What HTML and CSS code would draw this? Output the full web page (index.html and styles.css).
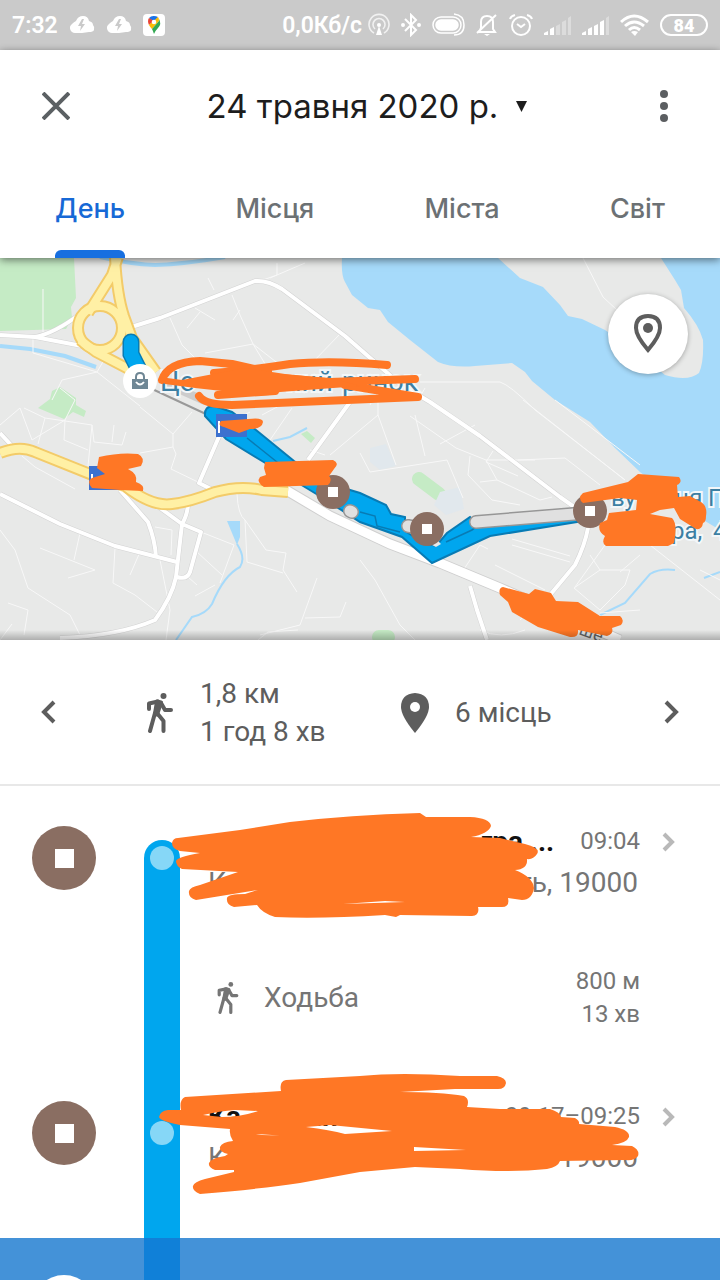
FILE: index.html
```html
<!DOCTYPE html>
<html lang="uk">
<head>
    <meta charset="UTF-8">
    <meta name="viewport" content="width=device-width, initial-scale=1.0">
    <title>Хронологія</title>
    <link rel="stylesheet" href="styles.css">
</head>
<body>
    <div class="status">
        <span>7:32</span>
        <svg class="cloud" width="26" height="20" viewBox="0 0 26 20"><path d="M6 18a5 5 0 0 1-3-9q2-2 4-3 2-5 7-5t6 5q4 1 4 4 2 2 1 5-1 2-5 2l-7 1z" fill="#fff"/><path d="M13 4l-4 7h3l-1 5 5-7h-3l2-5z" fill="#cacaca"/></svg>
        <svg class="cloud" width="26" height="20" viewBox="0 0 26 20"><path d="M6 18a5 5 0 0 1-3-9q2-2 4-3 2-5 7-5t6 5q4 1 4 4 2 2 1 5-1 2-5 2l-7 1z" fill="#fff"/><path d="M13 4l-4 7h3l-1 5 5-7h-3l2-5z" fill="#cacaca"/></svg>
        <svg width="22" height="22" viewBox="0 0 22 22"><rect width="22" height="22" rx="4" fill="#fff"/><path d="M11 2a6 6 0 0 0-5 2l5 4 4-5q-2-1-4-1z" fill="#1a73e8"/><path d="M6 4q-2 3 0 7l5-4z" fill="#ea4335"/><path d="M15 3l-9 8q1 2 3 4l7-8q0-3-1-4z" fill="#fbbc04"/><path d="M16 5q3 5-1 9-3 3-4 6-1-3-2-5l7-8z" fill="#34a853"/><circle cx="11" cy="8" r="2.3" fill="#fff"/></svg>
        <div class="status-right">
            <span>0,0Кб/с</span>
            <div class="status-icons">
                <svg width="22" height="24" viewBox="0 0 22 24" fill="none" stroke="#f1f1f1" stroke-width="1.6"><path d="M6 20a10 10 0 1 1 10 0M7 16a6 6 0 1 1 8 0"/><path d="M11 13l3 9H8z" fill="#fff" stroke="none"/><circle cx="11" cy="12" r="2" fill="#fff" stroke="none"/></svg>
                <svg width="20" height="24" viewBox="0 0 20 24" fill="none" stroke="#fff" stroke-width="2"><path d="M4 6l11 11-5 5V2l5 5L4 18"/><circle cx="2" cy="12" r="1" fill="#fff"/><circle cx="18" cy="12" r="1" fill="#fff"/></svg>
                <svg width="33" height="24" viewBox="0 0 33 24" fill="none" stroke="#fff" stroke-width="1.5"><rect x="1" y="4" width="28" height="16" rx="8"/><rect x="4" y="7" width="22" height="10" rx="5" fill="#fff"/><path d="M22 1q10 1 10 11t-10 10"/></svg>
                <svg width="22" height="24" viewBox="0 0 22 24" fill="none" stroke="#fff" stroke-width="2"><path d="M3 19h16l-2-3V9q0-6-6-6T5 9v6zM1 20L20 2"/><path d="M8 21h6l-3 2z" fill="#fff" stroke="none"/></svg>
                <svg width="24" height="24" viewBox="0 0 24 24" fill="none" stroke="#fff" stroke-width="2"><circle cx="12" cy="13" r="9"/><path d="M8 11l4 3 4-3M1 6q1-3 5-4M23 6q-1-3-5-4"/></svg>
                <svg width="27" height="20" viewBox="0 0 27 20" fill="#fff"><path d="M0 20v-2l4-2v4zM6 20v-6l4-2v8z"/><path d="M12 20v-9l4-2v11zM18 20V7l4-2v15zM24 20V3l3-2v19z" opacity=".35"/></svg>
                <svg width="27" height="20" viewBox="0 0 27 20" fill="#fff"><path d="M0 20v-2l4-2v4zM6 20v-6l4-2v8zM12 20v-9l4-2v11zM18 20V7l4-2v15z"/><path d="M24 20V3l3-2v19z" opacity=".35"/></svg>
                <svg width="29" height="22" viewBox="0 0 29 22" fill="none" stroke="#fff" stroke-width="3"><path d="M1 8q13-12 27 0M5 12q9-8 19 0M9 16q5-5 11 0"/><path d="M11 18q3-2 7 0l-3 4z" fill="#fff" stroke="none"/></svg>
                <span class="battery"><b>84</b></span>
            </div>
        </div>
    </div>

    <header class="header">
        <div class="toolbar">
            <button class="icon-btn" aria-label="Закрити"><svg width="28" height="28" viewBox="0 0 28 28" stroke="#5b6063" stroke-width="4"><path d="M1 1l26 26M27 1L1 27"/></svg></button>
            <button class="date">24 травня 2020 р. <svg width="11" height="11" viewBox="0 0 12 12"><path d="M0 0h12L6 12z" fill="#1d1d1d"/></svg></button>
            <button class="icon-btn" aria-label="Меню"><svg width="8" height="32" viewBox="0 0 8 32" fill="#5b5e61"><circle cx="4" cy="4" r="4"/><circle cx="4" cy="16" r="4"/><circle cx="4" cy="28" r="4"/></svg></button>
        </div>
        <nav class="tabs">
            <a href="#" class="tab active">День</a>
            <a href="#" class="tab">Місця</a>
            <a href="#" class="tab">Міста</a>
            <a href="#" class="tab">Світ</a>
        </nav>
    </header>

    <div class="map">
        <svg class="map-svg" viewBox="0 258 720 382">
            <!-- water and land -->
            <path class="water" d="M342 258Q341 275 345 282L352 295 368 308 380 310 388 322 410 340 438 362Q452 368 475 366L512 363 525 372 532 381 555 400 590 422 615 448 640 472 700 518 720 530V258z"/>
            <path class="land" d="M498 258L520 278 543 287 560 305 568 316 582 319 605 330 640 354 665 375Q688 382 699 373 704 362 703 340 699 325 684 308L681 290 675 280 661 258z"/>
            <path class="green" d="M0 258H74L76 298 71 307 72 318 66 329 0 331z"/>
            <path class="green" d="M60 387L76 398V405L86 411 84 417 73 412 64 419 38 408 50 399 52 391zM301 434L307 431 315 438 311 443z"/>
            <path class="green-line" d="M419 479L439 494M379 637L388 637"/>
            <path d="M370 448l16-4 10 22-16 4-10-8zM440 492l20-5 4 22-18 6-12-10z" fill="#e1e8ed"/>
            <path class="water" d="M227 521H240V537L237 545z"/>
            <g class="stream">
                <path d="M237 544Q246 558 240 567 224 575 212 604 206 614 192 617L176 640M600 615L625 603 650 574Q660 568 675 570M704 578L720 572M273 441L290 437 307 428"/>
                <path d="M0 346L30 349 65 356 96 367M100 257Q130 264 155 265 185 264 225 257" stroke-width="4"/>
            </g>
            <!-- small streets -->
            <g class="minor">
                <path d="M43 289V334M33 336V353L97 372 140 406M97 372L104 360M52 400L62 380 97 372M208 278L214 290M232 295L240 315 253 344 270 372M277 263V275L260 281M305 263L270 278M195 308L215 320M200 312L187 328M240 310L233 320M170 318L182 345 195 358M205 353L253 344 280 365M340 334L310 365M0 425L20 408 32 440 65 420 75 400 60 388M24 408L45 418 38 444M45 418L92 425 88 466M65 420L64 440 88 450M92 425L94 442 122 445 126 432M114 425L112 442M22 456L35 467 75 489M140 453L173 447 176 454 171 469 200 483M140 407L173 434 192 412M173 434V447M0 530L15 550 28 588 70 615 80 635M8 603L28 610 24 635M0 640L12 624M40 548L95 570 68 578M80 533L74 560M115 548L113 583 135 595 157 612M140 552L130 575M155 527L172 530 171 555M160 560L170 610 166 640M201 532L234 545 220 583M197 552L222 575M215 585L195 596M237 494Q238 515 245 520L266 550 286 553 283 570 297 592M245 520L247 562 283 573M188 577L197 585M317 578L300 625 260 635M305 618L340 617 346 602M258 640L268 632 298 630"/>
                <path d="M583 258L603 297 617 310M420 382H500Q510 385 535 410L625 480M523 400L625 480M555 400L640 465M415 415L425 456M410 416L456 448 486 460 535 460M493 451L486 462 518 476M440 444L475 425M378 415L396 465M360 430L378 415 378 400M360 453L370 472 447 460 463 498M470 456L468 475 492 500 520 505M486 460L497 480 480 482M497 480L540 500M518 460L565 458 600 485M540 500L552 497M512 539L570 556M512 545L570 562M495 565L545 590M460 575L480 545 488 549M360 560L375 580 400 625 415 640M520 620L540 600M575 587L605 545M590 555L600 570 574 588 600 610 625 585 630 570 625 570 600 570M650 545L720 600M640 555L620 572M700 570L720 580M600 613L640 610M600 615L590 640M480 630Q500 640 525 630M365 380L378 395M385 375L370 405M425 388L418 400M215 430L250 412M262 415L290 400M270 440L292 408M330 455L360 430M310 450L325 455"/>
            </g>
            <!-- streets -->
            <g class="road-edge"><path id="main" d="M0 335L35 337Q55 333 80 314M35 337L82 346M128 328L160 318 255 281Q268 280 282 289L345 336 400 384 430 402 480 436 560 497 590 518M588 528Q585 545 575 565L550 595M470 586L477 610 487 640M0 494L60 524 115 546 177 562M120 490L148 522Q155 540 156 557M160 508L182 524 201 532 190 572Q187 580 177 577M188 505Q187 516 182 524L176 577Q172 597 155 620 118 636 60 638M221 432L199 483 213 490M350 402L308 460M0 433L12 446M326 505V516"/></g>
            <use href="#main" class="road"/>
            <path class="highway-edge" d="M286 490L330 516 390 544 440 563 500 588 620 640"/>
            <path class="highway" d="M286 490L330 516 390 544 440 563 500 588 620 640"/>
            <g class="yellow-edge"><path id="yellow" d="M118 257L112 275 88 313M115 257Q117 295 124 316L132 338 156 372M0 453Q20 445 35 452L90 474 125 486Q152 507 172 504 190 502 215 492 240 485 262 490L288 492M80 340L96 352 140 375"/><circle id="ring" cx="100" cy="328" r="22"/></g>
            <use href="#yellow" class="yellow"/><use href="#ring" class="yellow"/>
            <path d="M150 388L208 415M318 488L350 516" fill="none" stroke="#999" stroke-width="2"/>
            <path d="M165 383L205 401" fill="none" stroke="#ccc" stroke-width="8"/>
            <!-- route -->
            <path class="route-edge" d="M131 342V354L142 376"/>
            <path class="route-line" d="M131 342V354L142 376"/>
            <path class="route" d="M214 406L232 412 256 430 294 461 330 484 360 493 386 505 391 514 405 517 405 531 424 543 436 546 447 533 470 517 480 526 590 511V520L490 536 432 563 402 537 360 522 318 495 262 461 226 439 205 416Q204 406 214 406z"/>
            <path d="M247 438L292 474M360 512L375 516 377 526 400 532M446 542L472 530 482 522" fill="none" stroke="#087bb4" stroke-width="1.5"/>
            <path d="M432 545L438 541 441 544 436 547z" fill="#e8e8e8"/>
            <path d="M476 522L586 513M408 526L425 529M350 511L352 512" fill="none" stroke="#969696" stroke-width="14" stroke-linecap="round"/>
            <path d="M476 522L586 513M408 526L425 529M350 511L352 512" fill="none" stroke="#e0e0e0" stroke-width="11" stroke-linecap="round"/>
            <g fill="#3c71cf"><path d="M216 414h31v23h-31zM89 466h31v24H89z"/></g>
            <path d="M219 421v12M92 474v6h5" fill="none" stroke="#fff" stroke-width="2"/>
            <!-- stops -->
            <g fill="#8a6e62"><circle cx="333" cy="492" r="17"/><circle cx="427" cy="529" r="17"/><circle cx="590" cy="511" r="17"/></g>
            <path d="M328 487h10v10h-10zM422 524h10v10h-10zM585 506h10v10h-10z" fill="#fff"/>
            <circle cx="140" cy="381" r="17" fill="#fff"/>
            <path d="M132 379h16v10h-16z" fill="#6f8795"/>
            <path d="M136 379v-2q0-4 4-4t4 4v2" fill="none" stroke="#6f8795" stroke-width="2"/>
            <path d="M136 382q4 5 8 0" fill="none" stroke="#fff" stroke-width="2"/>
            <!-- labels -->
            <g class="label">
                <text class="big" x="160" y="391">Це</text><text class="big" x="286" y="391">ний</text><text class="big" x="342" y="391">ринок</text>
                <text x="611" y="506">ву</text><text x="675" y="506">ця</text><text x="708" y="506">П</text>
                <text x="671" y="539">ра,</text><text x="713" y="539">4</text>
            </g>
            <text class="street" transform="translate(578 634) rotate(20)">ше</text>
            <!-- marker strokes -->
            <g class="scribble">
                <path class="pen" d="M162 380Q168 362 200 361L232 364 268 372M214 373Q260 369 290 364 330 360 387 365M255 376L330 382 415 379M345 385L418 397 300 402 232 405Q205 405 199 396M218 395L275 391"/>
                <path d="M160 377L182 380 245 368 285 374 335 379 360 386 320 389 280 392 270 395 220 397 222 391 195 388 165 384z"/>
                <path d="M221 421Q217 426 224 427L239 433 250 429Q262 429 263 422 263 417 248 419z"/>
                <path d="M99 457Q120 452 138 454 146 458 141 466L128 469Q138 474 136 482 145 485 143 491L120 490 92 488Q86 481 92 478L105 474 97 468z"/>
                <path d="M265 462L333 460Q340 463 334 469L329 476Q333 480 328 485L264 487Q256 482 260 477L266 475 264 468z"/>
                <path d="M583 493L628 482 638 474 679 477Q683 482 677 485L678 497 690 496 699 501Q708 505 706 516 706 522 703 523 702 530 696 529L680 519 674 508 660 510 650 514 672 518Q678 524 674 543L668 546H606Q601 543 605 536 597 531 600 523L607 520 609 513 636 510 637 500 620 498 583 503Q577 498 583 493z"/>
                <path d="M503 587L529 594 535 589 551 593 556 601 578 602 600 616 620 616Q625 620 621 625L612 628Q614 634 607 636L578 630Q579 638 570 637L538 627 512 612 508 602 500 595Q498 588 503 587z"/>
            </g>
        </svg>
        <button class="locate" aria-label="Місце"><svg width="28" height="40" viewBox="0 0 28 40"><path d="M14 2Q2 2 2 14q0 8 12 22 12-14 12-22Q26 2 14 2z" fill="none" stroke="#5d5d5d" stroke-width="4"/><circle cx="14" cy="14" r="5" fill="#5d5d5d"/></svg></button>
    </div>

    <section class="summary">
        <button class="icon-btn" aria-label="Назад"><svg width="16" height="24" viewBox="0 0 16 24" fill="none" stroke="#5d5d5d" stroke-width="4"><path d="M14 2L4 12l10 10"/></svg></button>
        <div class="stat">
            <svg width="40" height="40" viewBox="0 0 40 40"><g id="walker" fill="none" stroke="currentColor" stroke-width="4" stroke-linecap="round" stroke-linejoin="round"><circle cx="23.5" cy="3" r="3" fill="currentColor" stroke="none"/><path d="M9 16V10.500L18 8.500M21 10l4 7h6M15 20l-5 18M17 20l6.500 8v10"/><path d="M17 8.500l4 1-4 12-2-1z"/></g></svg>
            <p>1,8 км<br>1 год 8 хв</p>
        </div>
        <div class="stat places">
            <svg width="40" height="40" viewBox="0 0 40 40"><path d="M20 0Q6 1 6 14q0 9 14 26 14-17 14-26Q34 1 20 0z" fill="#5d5d5d"/><circle cx="20" cy="14" r="5" fill="#fff"/></svg>
            <p>6 місць</p>
        </div>
        <button class="icon-btn" aria-label="Вперед"><svg width="16" height="24" viewBox="0 0 16 24" fill="none" stroke="#5d5d5d" stroke-width="4"><path d="M2 2l10 10L2 22"/></svg></button>
    </section>

    <main class="timeline">
        <article class="row place">
            <span class="stop"></span>
            <span class="track first"><i class="dot"></i></span>
            <div class="info">
                <div class="line">
                    <h2 class="cut">гра ...</h2>
                    <time>09:04</time>
                    <svg class="chevron" width="14" height="20" viewBox="0 0 14 20"><path d="M2 2l8 8-8 8"/></svg>
                </div>
                <div class="address"><span>К</span><span>ть, 19000</span></div>
            </div>
        </article>
        <article class="row walk">
            <span></span>
            <span class="track"></span>
            <div class="move">
                <svg width="32" height="32" viewBox="0 0 40 40"><use href="#walker"/></svg>
                <span class="kind">Ходьба</span>
                <p>800 м<br>13 хв</p>
            </div>
        </article>
        <article class="row place last">
            <span class="stop"></span>
            <span class="track"><i class="dot"></i></span>
            <div class="info">
                <div class="line">
                    <h2><span>Ка</span> <span class="name-end">ин</span></h2>
                    <time>09:17–09:25</time>
                    <svg class="chevron" width="14" height="20" viewBox="0 0 14 20"><path d="M2 2l8 8-8 8"/></svg>
                </div>
                <div class="address"><span>К</span><span>19000</span></div>
            </div>
        </article>
        <article class="row selected">
            <span class="stop"></span>
            <span class="track"></span>
        </article>
        <svg class="ink" viewBox="0 786 720 494">
            <g class="scribble">
                <path d="M178 838L240 830 290 822Q350 815 420 813L426 817H470Q490 818 491 826 488 834 471 837L500 838 525 844Q541 848 537 854 533 860 527 859 528 869 515 870 533 877 534 888 532 900 522 900L508 898Q510 907 502 907H478Q480 915 472 916L400 915 396 917 385 915Q320 919 275 917 262 913 257 905L234 907Q226 905 227 898 228 894 245 894L258 890 196 900Q188 898 189 891 190 887 200 885L238 872 182 869Q176 866 176 861 177 857 200 853L180 851Q172 849 172 843 173 838 178 838zM343 904L405 902 385 901z" fill-rule="evenodd"/>
                <path d="M281 1091Q279 1081 286 1080L360 1076Q400 1072 460 1076H497Q506 1078 506 1083 505 1089 498 1089H455L400 1092Q440 1092 464 1096 470 1099 467 1107L500 1109H550Q560 1112 561 1117L575 1118Q580 1121 579 1124L615 1127Q630 1130 629 1137 627 1143 612 1145L632 1146Q640 1150 638 1156 635 1161 625 1160L560 1161Q558 1167 547 1169 510 1173 460 1169L415 1167 360 1172 300 1183Q260 1189 200 1194 192 1191 193 1186 194 1182 205 1179L234 1172V1170H215Q208 1167 209 1163 211 1158 225 1156L228 1154Q219 1152 220 1147 222 1142 233 1141 229 1135 230 1129L180 1125Q160 1121 159 1117 160 1111 168 1110H181Q179 1100 185 1097zM203 1115Q220 1111 235 1110L258 1111Q240 1117 222 1117zM306 1127L330 1125 392 1131 345 1134Q330 1130 306 1127zM414 1147L466 1150 414 1151zM256 1134L280 1135.500 262 1135z" fill-rule="evenodd"/>
            </g>
        </svg>
    </main>
</body>
</html>
```
FILE: styles.css
```css
* {
    box-sizing: border-box;
}
body {
    margin: 0;
    height: 100vh;
    display: flex;
    flex-direction: column;
    overflow: hidden;
    background: #fff;
    color: #5d5d5d;
    font-family: Roboto, 'Noto Sans', sans-serif;
}
button {
    border: none;
    background: none;
    padding: 0;
    cursor: pointer;
}
p, h2 {
    margin: 0;
}
svg {
    flex: none;
}

/* status bar */
.status {
    flex: none;
    height: 50px;
    padding: 0 12px;
    display: flex;
    align-items: center;
    gap: 11px;
    background: #cacaca;
    color: #fff;
    font-size: 23px;
    font-weight: 600;
}
.status-right {
    margin-left: auto;
    display: flex;
    align-items: center;
    gap: 6px;
}
.status-icons {
    display: flex;
    align-items: center;
    gap: 11px;
}
.battery {
    width: 48px;
    height: 22px;
    border: 2px solid #fff;
    border-radius: 11px;
    display: flex;
    align-items: center;
    justify-content: center;
    font-size: 18px;
}

/* header */
.header {
    flex: none;
    position: relative;
    z-index: 2;
    background: #fff;
    box-shadow: 0 2px 8px rgba(0, 0, 0, 0.5);
}
.toolbar {
    height: 112px;
    display: grid;
    grid-template-columns: 112px 1fr 112px;
}
.icon-btn {
    display: flex;
    align-items: center;
    justify-content: center;
}
.date {
    display: flex;
    align-items: center;
    justify-content: center;
    gap: 18px;
    padding-left: 14px;
    font-family: Inter, sans-serif;
    font-size: 33px;
    color: #1d1d1d;
}
.tabs {
    height: 96px;
    display: flex;
    justify-content: space-around;
}
.tab {
    display: flex;
    flex-direction: column;
    justify-content: space-between;
    font-family: Inter, sans-serif;
    font-size: 27px;
    font-weight: 500;
    line-height: 94px;
    color: #6c7174;
    text-decoration: none;
}
.tab.active {
    color: #1769d6;
}
.tab.active::after {
    content: '';
    height: 8px;
    margin-top: -8px;
    border-radius: 6px 6px 0 0;
    background: #176fe0;
}

/* map */
.map {
    flex: none;
    position: relative;
    background: #e8e9e8;
}
.map::after {
    content: '';
    position: absolute;
    left: 0;
    right: 0;
    bottom: 0;
    height: 10px;
    background: linear-gradient(transparent, rgba(0, 0, 0, 0.25));
}
.map-svg {
    display: block;
    width: 100%;
}
.water { fill: #a6dafa; }
.land { fill: #e8e9e8; }
.green { fill: #c5ebc5; }
.green-line { fill: none; stroke: #c5ebc5; stroke-width: 14; stroke-linecap: round; }
.stream { fill: none; stroke: #a6dafa; stroke-width: 2; }
.minor { fill: none; stroke: #f8f8f8; stroke-width: 1; }
.road-edge { fill: none; stroke: #d3d3d3; stroke-width: 5; stroke-linejoin: round; }
.road { fill: none; stroke: #fff; stroke-width: 4; stroke-linejoin: round; }
.highway-edge { fill: none; stroke: #cfcfcf; stroke-width: 11; }
.highway { fill: none; stroke: #fff; stroke-width: 9; }
.yellow-edge { fill: none; stroke: #f3cb69; stroke-width: 12; }
.yellow { fill: none; stroke: #fff0a5; stroke-width: 8; }
.route-edge { fill: none; stroke: #087bb4; stroke-width: 17; stroke-linecap: round; }
.route-line { fill: none; stroke: #00a6ee; stroke-width: 14; stroke-linecap: round; }
.route { fill: #00a6ee; stroke: #087bb4; stroke-width: 2; }
.label {
    font-size: 24px;
    fill: #3c7fa3;
    stroke: #f3f7f9;
    stroke-width: 4;
    paint-order: stroke;
}
.label .big {
    font-size: 27px;
}
.street {
    font-size: 18px;
    fill: #666;
}
.scribble {
    fill: #ff7725;
}
.pen {
    fill: none;
    stroke: #ff7725;
    stroke-width: 8;
    stroke-linecap: round;
    stroke-linejoin: round;
}
.locate {
    position: absolute;
    top: 36px;
    right: 32px;
    width: 80px;
    height: 80px;
    border-radius: 50%;
    background: #fff;
    box-shadow: 0 1px 5px rgba(0, 0, 0, 0.3);
    display: flex;
    align-items: center;
    justify-content: center;
}

/* day summary */
.summary {
    flex: none;
    height: 146px;
    display: grid;
    grid-template-columns: 96px 1fr 1fr 96px;
    border-bottom: 2px solid #e8e8e8;
    font-size: 28px;
    line-height: 38px;
}
.stat {
    display: flex;
    align-items: center;
    gap: 20px;
    padding: 2px 0 0 44px;
}
.places {
    padding-left: 35px;
}

/* timeline */
.timeline {
    flex: 1;
    position: relative;
    min-height: 0;
    overflow: hidden;
    color: #757575;
}
.row {
    display: grid;
    grid-template-columns: 128px 68px 1fr;
    height: 144px;
}
.row.walk {
    height: 131px;
}
.row.last {
    height: 177px;
}
.stop {
    width: 64px;
    height: 64px;
    margin: 40px 32px;
    border-radius: 50%;
    background: #8a6e62;
    display: grid;
    place-items: center;
}
.stop::after {
    content: '';
    width: 19px;
    height: 19px;
    background: #fff;
}
.track {
    width: 36px;
    margin: 0 16px;
    padding-top: 60px;
    background: #00a6ee;
}
.track.first {
    margin-top: 54px;
    padding-top: 6px;
    border-radius: 18px 18px 0 0;
}
.dot {
    display: block;
    width: 24px;
    height: 24px;
    margin: 0 auto;
    border-radius: 50%;
    background: #86d7f7;
}
.info {
    padding: 35px 44px 0 12px;
    line-height: 41px;
}
.line {
    display: flex;
    align-items: center;
}
.line h2 {
    flex: 1;
    font-size: 28px;
    font-weight: 700;
    line-height: 41px;
    color: #111;
}
.line h2.cut {
    text-align: right;
    padding-right: 26px;
}
.name-end {
    margin-left: 58px;
}
.line time {
    font-size: 24px;
}
.chevron {
    margin-left: 22px;
    fill: none;
    stroke: #b9b9b9;
    stroke-width: 4;
}
.address {
    display: flex;
    justify-content: space-between;
    padding-right: 38px;
    font-size: 28px;
}
.move {
    display: flex;
    align-items: center;
    gap: 20px;
    padding: 4px 80px 0 16px;
}
.kind {
    font-size: 28px;
}
.move p {
    margin-left: auto;
    font-size: 24px;
    line-height: 33px;
    text-align: right;
}
.row.selected {
    background: #4492d8;
}
.selected .stop {
    margin-top: 37px;
    background: #fff;
}
.selected .track {
    background: #1080d8;
}
.ink {
    position: absolute;
    top: 0;
    left: 0;
    width: 100%;
    pointer-events: none;
}
```
